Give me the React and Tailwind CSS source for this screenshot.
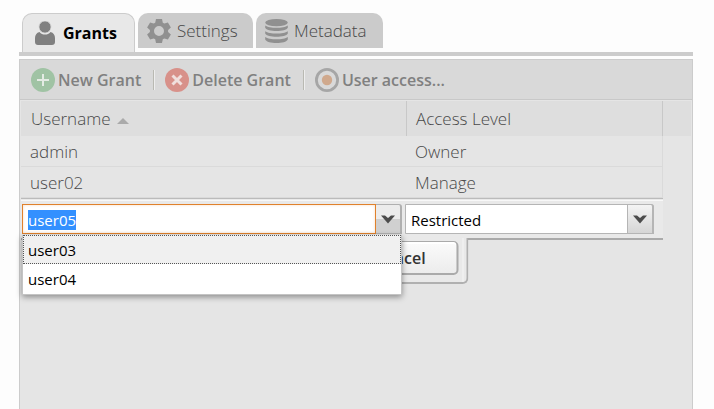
import { useEffect, useRef } from "react";

function UserIcon() {
  return (
    <svg viewBox="0 0 20 24" className="h-6 w-5 fill-[#808080]" aria-hidden="true">
      <path d="M4.500 11C6 12.800 7.800 13.600 10 13.600s4-.8 5.500-2.600c3 .8 4.500 3 4.500 6V21c0 1.800-1.200 3-3 3H3c-1.800 0-3-1.200-3-3v-4c0-3 1.500-5.200 4.500-6z" />
      <circle cx="10" cy="6" r="6.200" stroke="#e8e8e8" strokeWidth="1" />
    </svg>
  );
}

function GearIcon() {
  return (
    <svg viewBox="0 0 24 24" className="size-6 fill-[#909090]" aria-hidden="true">
      <path
        fillRule="evenodd"
        d="M9 0h6l.8 3.700 1.500.9 3.600-1.200 3 5-2.800 2.500v2.200l2.800 2.500-3 5-3.600-1.200-1.500.9L15 24H9l-.8-3.700-1.500-.9-3.600 1.200-3-5 2.800-2.500v-2.200L.1 8.400l3-5 3.600 1.200 1.500-.9zM12 7a5 5 0 1 0 0 10 5 5 0 0 0 0-10z"
      />
    </svg>
  );
}

function DatabaseIcon() {
  return (
    <svg viewBox="0 0 23 24" className="h-6 w-[23px] fill-[#909090]" aria-hidden="true">
      <ellipse cx="11.500" cy="3.600" rx="11.300" ry="3.600" />
      <path d="M.2 6.500c2 1.600 6.800 2.300 11.300 2.300s9.300-.7 11.300-2.300v2.300c-1 2.300-6 3.300-11.300 3.300S1.200 11.100.2 8.800z" />
      <path d="M.2 12.200c2 1.600 6.800 2.300 11.300 2.300s9.300-.7 11.300-2.300v2.300c-1 2.300-6 3.300-11.300 3.300S1.200 16.800.2 14.500z" />
      <path d="M.2 18c2 1.600 6.800 2.300 11.300 2.300s9.300-.7 11.300-2.300v2.500C21.800 23 16.800 24 11.500 24S1.200 23 .2 20.500z" />
    </svg>
  );
}

function AddIcon() {
  return (
    <svg viewBox="0 0 24 24" className="size-6" aria-hidden="true">
      <circle cx="12" cy="12" r="12" fill="#a0c3a4" />
      <path d="M12 6v12M6 12h12" stroke="#e4ebe4" strokeWidth="2" />
    </svg>
  );
}

function RemoveIcon() {
  return (
    <svg viewBox="0 0 24 24" className="size-6" aria-hidden="true">
      <circle cx="12" cy="12" r="12" fill="#d8918a" />
      <path d="M7.500 7.500l9 9M16.500 7.500l-9 9" stroke="#f0dfdd" strokeWidth="3" />
    </svg>
  );
}

function AccessIcon() {
  return (
    <svg viewBox="0 0 24 24" className="size-6" aria-hidden="true">
      <circle cx="12" cy="12" r="10.600" fill="#d9d9d9" stroke="#a6a6a6" strokeWidth="2.800" />
      <circle cx="12" cy="12" r="5.200" fill="#d0a98d" />
    </svg>
  );
}

function Chevron() {
  return (
    <svg viewBox="0 0 14 9" className="h-[9px] w-3.5 fill-[#4c4c4c]" aria-hidden="true">
      <path d="M0 .5h4l3 2.500 3-2.500h4L7 8.500z" />
    </svg>
  );
}

const tabs = [
  { label: "Settings", Icon: GearIcon, width: "w-[115px]" },
  { label: "Metadata", Icon: DatabaseIcon, width: "w-[127px]" },
];

const actions = [
  { label: "New Grant", Icon: AddIcon },
  { label: "Delete Grant", Icon: RemoveIcon },
  { label: "User access...", Icon: AccessIcon },
];

const grants = [
  { user: "admin", level: "Owner" },
  { user: "user02", level: "Manage" },
];

function UserCombo() {
  const input = useRef(null);
  useEffect(() => {
    input.current.focus();
    input.current.select();
  }, []);
  return (
    <div className="relative flex min-w-0 flex-1">
      <input
        ref={input}
        aria-label="Username"
        defaultValue="user05"
        className="h-[30px] min-w-0 flex-1 border border-[#e0812c] bg-white px-[5px] pt-0.5 text-[15px] leading-[25px] text-black shadow-[inset_0_0_3px_#f6dcc4] outline-none selection:bg-[#3390ff] selection:text-white"
      />
      <button
        type="button"
        aria-label="Show users"
        className="flex h-[30px] w-[26px] items-center justify-center rounded-tr-[3px] border-t border-r-2 border-b border-[#b0b0b0] bg-linear-to-b from-[#ececec] from-50% to-[#d0d0d0] to-50%"
      >
        <Chevron />
      </button>
      <ul
        role="listbox"
        aria-label="Users"
        className="absolute top-full right-0 left-0 z-10 mt-px border-x border-b border-[#c4c4c4] bg-white text-[15px] leading-7 text-black shadow-[0_2px_6px_rgba(0,0,0,0.4)]"
      >
        <li role="option" aria-selected="true" className="h-[29px] border border-dotted border-[#555] bg-[#f0f0f0] px-1">
          user03
        </li>
        <li role="option" aria-selected="false" className="h-[30px] border border-white px-1">
          user04
        </li>
      </ul>
    </div>
  );
}

function LevelSelect() {
  return (
    <div className="relative w-[249px]">
      <select
        aria-label="Access Level"
        defaultValue="Restricted"
        className="block h-[30px] w-full appearance-none rounded-tr-[3px] border border-[#b5b5b5] bg-white pt-0.5 pl-[5px] text-[15px] text-black outline-none"
      >
        <option>Owner</option>
        <option>Manage</option>
        <option>Restricted</option>
      </select>
      <span className="pointer-events-none absolute inset-y-0 right-0 flex w-[27px] items-center justify-center rounded-tr-[3px] border border-r-2 border-[#b5b5b5] bg-linear-to-b from-[#f4f4f4] to-[#d6d6d6]">
        <Chevron />
      </span>
    </div>
  );
}

function EditorButtons() {
  const button =
    "h-[34px] w-[116px] rounded-[5px] border border-r-2 border-b-2 border-[#aaa] bg-linear-to-b from-[#fbfbfb] to-[#ececec] text-base font-semibold text-[#333] shadow-[inset_0_2px_0_#fff]";
  return (
    <div className="absolute top-full left-1/2 -translate-x-1/2 rounded-br-[6px] border-r-2 border-b-2 border-[#b0b0b0] bg-[#e9e9e9] pr-[3px] pl-1">
      <div className="flex gap-[3px] border-r border-[#f6f6f6] pt-[3px] pr-1 pb-[7px] pl-1">
        <button type="button" className={button}>
          Update
        </button>
        <button type="button" className={button}>
          Cancel
        </button>
      </div>
    </div>
  );
}

export default function App() {
  return (
    <div className="flex min-h-screen flex-col bg-[#fdfdfd] pt-[13px] pr-[21px] pl-[19px] font-['Open_Sans',sans-serif] text-[17px] font-light text-[#484848]">
      <div role="tablist" className="flex items-start gap-[3px] border-b-4 border-[#ccc] pl-[3px]">
        <button
          type="button"
          role="tab"
          aria-selected="true"
          className="flex h-[39px] w-[113px] items-center gap-2 rounded-t-[10px] border border-b-0 border-[#ccc] bg-[#e8e8e8] pl-3 text-base font-bold text-black"
        >
          <UserIcon />
          Grants
        </button>
        {tabs.map(({ label, Icon, width }) => (
          <button
            key={label}
            type="button"
            role="tab"
            aria-selected="false"
            className={`flex h-[35px] items-center gap-1.5 rounded-t-[10px] bg-[#cbcbcb] pl-[9px] ${width}`}
          >
            <Icon />
            {label}
          </button>
        ))}
      </div>

      <div className="mt-[3px] flex-1 border border-b-0 border-[#ccc] bg-[#e5e5e5]">
        <div role="toolbar" className="flex h-10 items-center gap-3 border-b border-[#c8c8c8] bg-[#d9d9d9] pl-[11px]">
          {actions.map(({ label, Icon }, i) => (
            <div key={label} className="flex items-center gap-2.5">
              {i > 0 && <span className="h-5 w-0.5 border-l border-[#b9b9b2] bg-[#eee]" />}
              <button type="button" className="flex items-center gap-[3px] text-base font-semibold text-[#808080]">
                <Icon />
                {label}
              </button>
            </div>
          ))}
        </div>

        <div className="px-px pt-px">
          <table className="w-full table-fixed border-separate border-spacing-0 text-left">
            <colgroup>
              <col />
              <col className="w-64" />
              <col className="w-7" />
            </colgroup>
            <thead>
              <tr className="h-[35px] bg-[#dedede]">
                <th scope="col" className="border-r border-[#c8c8c8] pl-2.5 font-light">
                  <span className="flex items-center gap-1.5">
                    Username
                    <svg viewBox="0 0 12 6" className="mt-1 h-1.5 w-3 fill-[#aaa]" aria-hidden="true">
                      <path d="M6 0l6 6H0z" />
                    </svg>
                  </span>
                </th>
                <th scope="col" className="border-r border-[#c8c8c8] pl-[9px] font-light">
                  Access Level
                </th>
                <td />
              </tr>
            </thead>
            <tbody>
              {grants.map(({ user, level }) => (
                <tr key={user} className="h-[31px]">
                  <td className="border-b border-[#dadada] pt-px pl-[9px]">{user}</td>
                  <td className="border-r border-b border-[#dadada] pt-px pl-2">{level}</td>
                  <td />
                </tr>
              ))}
              <tr>
                <td colSpan={2} className="p-0">
                  <div className="relative border-t border-b-2 border-t-[#bbb] border-b-[#aaa] bg-[#e9e9e9] font-normal">
                    <div className="mt-px flex gap-[3px] border-t border-[#f8f8f8] pt-[3px] pr-[9px] pb-1 pl-px">
                      <UserCombo />
                      <LevelSelect />
                    </div>
                    <EditorButtons />
                  </div>
                </td>
                <td />
              </tr>
            </tbody>
          </table>
        </div>
      </div>
    </div>
  );
}
